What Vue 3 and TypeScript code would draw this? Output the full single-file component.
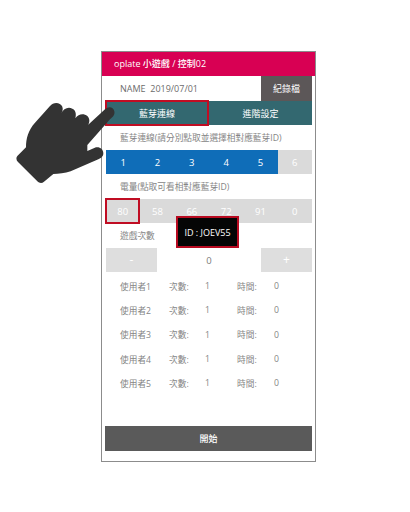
<script setup lang="ts">
const channels = ['1', '2', '3', '4', '5', '6']
const levels = ['80', '58', '66', '72', '91', '0']
const users = [1, 2, 3, 4, 5]
</script>

<template>
  <div class="page">
    <div class="phone">
      <div class="header">oplate 小遊戲 / 控制02</div>
      <div class="name-row">
        <span class="name">NAME&nbsp; 2019/07/01</span>
        <span class="log">紀錄檔</span>
      </div>
      <div class="tabs">
        <div class="tab marked">藍芽連線</div>
        <div class="tab">進階設定</div>
      </div>
      <div class="label first">藍芽連線(請分別點取並選擇相對應藍芽ID)</div>
      <div class="cells">
        <div v-for="(c, i) in channels" :key="c" class="cell" :class="i < 5 ? 'blue' : 'grey'">{{ c }}</div>
      </div>
      <div class="label second">電量(點取可看相對應藍芽ID)</div>
      <div class="cells levels">
        <div v-for="(l, i) in levels" :key="i" class="cell grey" :class="{ marked: i === 0 }">{{ l }}</div>
        <div class="tip">ID : JOEV55</div>
      </div>
      <div class="label third">遊戲次數</div>
      <div class="stepper">
        <div class="step">-</div>
        <div class="count">0</div>
        <div class="step">+</div>
      </div>
      <div class="users">
        <div v-for="u in users" :key="u" class="user">
          <span>使用者{{ u }}</span>
          <span>次數:</span>
          <span>1</span>
          <span>時間:</span>
          <span>0</span>
        </div>
      </div>
      <div class="start">開始</div>
    </div>
    <svg class="hand" viewBox="0 0 375 315" width="125" height="105">
      <path fill="#333333" d="M52 198 L78 172 C78 145 85 120 105 98 L150 48 C160 36 180 36 187 50 C190 58 187 65 183 72 C190 55 205 50 217 56 C226 60 230 70 226 85 C236 70 252 70 262 78 C270 86 270 98 262 108 L250 118 L315 58 C325 48 340 50 343 64 C345 74 340 80 330 88 L262 165 L262 183 L288 172 C300 170 310 178 310 190 C310 200 303 205 295 208 L212 244 C195 250 175 252 160 252 L132 275 C126 281 118 280 112 274 L54 216 C48 210 48 203 52 198 Z"/>
    </svg>
  </div>
</template>

<style>
html, body { margin: 0; background: #fff; }
</style>

<style scoped>
.page {
  position: relative;
  width: 410px;
  height: 512px;
  padding-top: 51px;
  box-sizing: border-box;
  overflow: hidden;
}
.phone {
  width: 215px;
  height: 411px;
  margin-left: 101px;
  box-sizing: border-box;
  border: 1px solid #8c8c8c;
  display: flex;
  flex-direction: column;
  font-family: "Open Sans", "Noto Sans CJK TC", sans-serif;
}
.header {
  height: 24px;
  line-height: 24px;
  background: #d80053;
  color: #fff;
  font-size: 9px;
  font-weight: 500;
  padding-left: 12px;
}
.name-row {
  height: 25px;
  margin: 0 3px 0 18px;
  display: flex;
  justify-content: space-between;
  align-items: center;
  font-size: 9px;
  color: #6c6c6c;
}
.log {
  width: 51px;
  height: 25px;
  line-height: 25px;
  text-align: center;
  background: #5c5758;
  color: #fff;
  font-size: 9px;
}
.tabs {
  height: 24px;
  margin: 0 3px 0 4px;
  display: flex;
  background: #336870;
  color: #fff;
  font-size: 9px;
}
.tab {
  flex: 1;
  display: flex;
  align-items: center;
  justify-content: center;
  box-sizing: border-box;
}
.tab.marked {
  flex: none;
  width: 104px;
  margin: -1px 0 -1px -1px;
  border: 2px solid #c00d23;
}
.label {
  font-size: 8.7px;
  color: #858585;
  padding-left: 18px;
  line-height: 12px;
}
.first { margin-top: 7px; margin-bottom: 6px; }
.second { margin-top: 7px; margin-bottom: 6px; }
.third { margin-top: 7px; margin-bottom: 6px; }
.cells {
  position: relative;
  height: 24px;
  margin: 0 3px 0 4px;
  display: grid;
  grid-template-columns: repeat(6, 1fr);
  font-size: 9.5px;
  color: #fff;
}
.cell {
  display: flex;
  align-items: center;
  justify-content: center;
  box-sizing: border-box;
}
.blue { background: #0f6db8; }
.grey { background: #dadada; }
.cell.marked {
  margin: -1px 0 -1px -1px;
  border: 2px solid #c00d23;
}
.tip {
  position: absolute;
  left: 70px;
  top: 17px;
  width: 63px;
  height: 32px;
  box-sizing: border-box;
  border: 2px solid #b80a20;
  background: #050505;
  color: #fff;
  display: flex;
  align-items: center;
  justify-content: center;
  font-size: 9px;
}
.stepper {
  height: 24px;
  margin: 0 3px 0 4px;
  display: flex;
  justify-content: space-between;
  align-items: center;
  font-size: 9.5px;
  color: #7d7d7d;
}
.step {
  width: 51px;
  height: 24px;
  line-height: 24px;
  text-align: center;
  background: #dedede;
  color: #fff;
  font-size: 12px;
}
.users { margin-top: 2px; }
.user {
  height: 24.3px;
  display: grid;
  grid-template-columns: 49px 36px 32px 37px 1fr;
  padding-left: 18px;
  align-items: center;
  font-size: 8.7px;
  color: #858585;
}
.start {
  margin: auto 3px 10px;
  height: 25px;
  line-height: 25px;
  text-align: center;
  background: #5a5a5a;
  color: #fff;
  font-size: 9px;
  font-weight: 500;
}
.hand {
  position: absolute;
  left: 0;
  top: 90px;
}
</style>
